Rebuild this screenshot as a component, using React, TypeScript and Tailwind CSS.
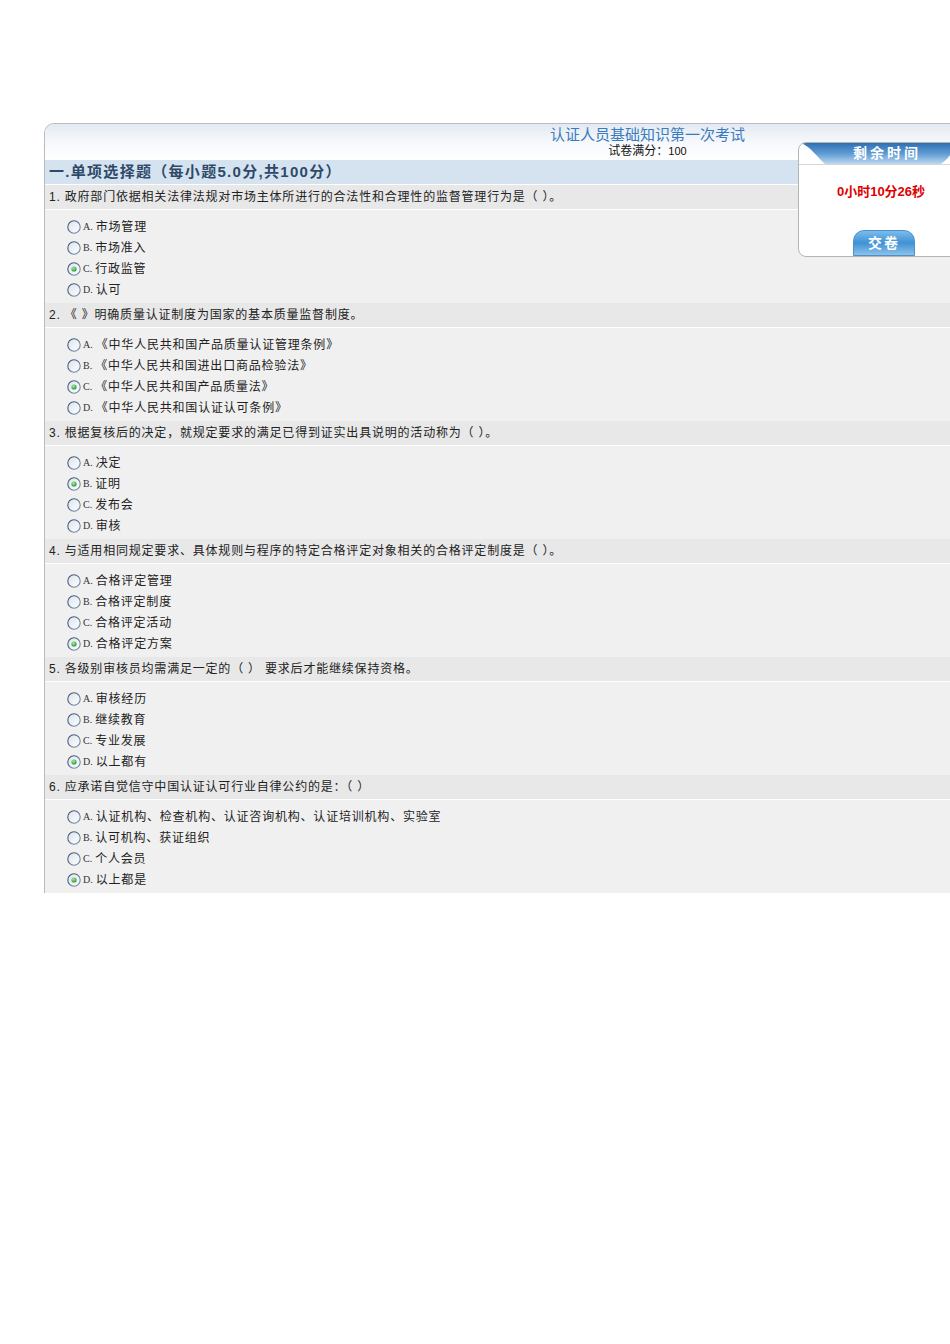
import React from "react";

type Q = { q: string; opts: string[]; ans: number; sep?: string };

const questions: Q[] = [
  {
    q: "1. 政府部门依据相关法律法规对市场主体所进行的合法性和合理性的监督管理行为是（ ）。",
    opts: ["市场管理", "市场准入", "行政监管", "认可"],
    ans: 2,
  },
  {
    q: "2. 《 》明确质量认证制度为国家的基本质量监督制度。",
    opts: [
      "《中华人民共和国产品质量认证管理条例》",
      "《中华人民共和国进出口商品检验法》",
      "《中华人民共和国产品质量法》",
      "《中华人民共和国认证认可条例》",
    ],
    ans: 2,
    sep: " ",
  },
  {
    q: "3. 根据复核后的决定，就规定要求的满足已得到证实出具说明的活动称为（  ）。",
    opts: ["决定", "证明", "发布会", "审核"],
    ans: 1,
  },
  {
    q: "4. 与适用相同规定要求、具体规则与程序的特定合格评定对象相关的合格评定制度是（ ）。",
    opts: ["合格评定管理", "合格评定制度", "合格评定活动", "合格评定方案"],
    ans: 3,
  },
  {
    q: "5. 各级别审核员均需满足一定的（ ） 要求后才能继续保持资格。",
    opts: ["审核经历", "继续教育", "专业发展", "以上都有"],
    ans: 3,
  },
  {
    q: "6. 应承诺自觉信守中国认证认可行业自律公约的是：（ ）",
    opts: [
      "认证机构、检查机构、认证咨询机构、认证培训机构、实验室",
      "认可机构、获证组织",
      "个人会员",
      "以上都是",
    ],
    ans: 3,
  },
];

function Radio({ checked }: { checked: boolean }) {
  return (
    <svg width="14" height="14" viewBox="0 0 14 14" className="shrink-0">
      <defs>
        <linearGradient id="rg" x1="0" y1="0" x2="1" y2="1">
          <stop offset="0" stopColor="#dbe3ec" />
          <stop offset="1" stopColor="#ffffff" />
        </linearGradient>
        <linearGradient id="rs" x1="0" y1="0" x2="1" y2="1">
          <stop offset="0" stopColor="#34496a" />
          <stop offset="1" stopColor="#8399b6" />
        </linearGradient>
        <radialGradient id="gd" cx="0.4" cy="0.35" r="0.7">
          <stop offset="0" stopColor="#a6eaa0" />
          <stop offset="1" stopColor="#1c9628" />
        </radialGradient>
      </defs>
      <circle cx="7" cy="7" r="6.2" fill="url(#rg)" stroke="url(#rs)" strokeWidth="1.1" />
      {checked && <circle cx="7" cy="7" r="2.6" fill="url(#gd)" />}
    </svg>
  );
}

export default function App() {
  const letters = ["A", "B", "C", "D"];
  return (
    <div
      className="relative w-[950px] h-[1344px] overflow-hidden bg-white text-[12px] text-[#222]"
      style={{ fontFamily: '"Liberation Sans", "Noto Sans CJK SC", sans-serif' }}
    >
      <div className="pt-[123px] pl-[44px]">
        <div className="w-[1206px] border-l border-t border-[#b8bcc2] rounded-tl-[10px] overflow-hidden">
          {/* header */}
          <div className="h-[36px] bg-gradient-to-b from-[#e4eaf1] via-[#f6f8fb] to-white flex flex-col items-center pt-[1px]">
            <div className="text-[15px] leading-[19px] text-[#3a7bc0]">认证人员基础知识第一次考试</div>
            <div className="text-[12px] leading-[14px] text-[#111]">
              试卷满分：<span className="text-[11px]">100</span>
            </div>
          </div>
          {/* section */}
          <div className="h-[25px] bg-[#d5e3f0] border-b border-white flex items-center pl-[4px]">
            <span className="text-[15px] font-bold text-[#2e4a68] tracking-[1.3px]">
              一.单项选择题（每小题5.0分,共100分）
            </span>
          </div>
          {questions.map((item, qi) => (
            <div key={qi}>
              <div className="h-[25px] bg-[#e8e8e8] border-b border-white flex items-center pl-[4px] text-[12px] tracking-[0.8px] text-[#222]">
                {item.q}
              </div>
              <div className="h-[93px] bg-[#f0f0f0] pt-[6px] pl-[22px]">
                {item.opts.map((o, oi) => (
                  <div key={oi} className="h-[21px] flex items-center">
                    <Radio checked={oi === item.ans} />
                    <span
                      className="ml-[2px] text-[10px] text-[#333]"
                      style={{ fontFamily: '"Liberation Serif", serif' }}
                    >
                      {letters[oi]}.
                    </span>
                    <span className="ml-[3px] text-[12px] tracking-[0.8px] text-[#222]">
                      {item.sep ? " " : ""}
                      {o}
                    </span>
                  </div>
                ))}
              </div>
            </div>
          ))}
        </div>
      </div>

      {/* timer box */}
      <div className="absolute left-[798px] top-[142px] w-[170px] h-[115px] bg-white border border-[#b5b5b5] rounded-[8px] overflow-hidden">
        <div className="relative h-[22px] border-b border-[#d8d8d8]">
          <svg width="170" height="22" viewBox="0 0 170 22" className="absolute left-0 top-0">
            <defs>
              <linearGradient id="tab" x1="0" y1="0" x2="0" y2="1">
                <stop offset="0" stopColor="#2f6fb4" />
                <stop offset="0.5" stopColor="#5f9bd3" />
                <stop offset="1" stopColor="#bcd8ef" />
              </linearGradient>
            </defs>
            <path
              d="M2 0 L160 0 C155 6 150 16 142 21 L26 21 C18 14 12 4 2 0 Z"
              fill="url(#tab)"
            />
          </svg>
          <div className="absolute left-[30px] w-[116px] top-0 h-[21px] flex items-center justify-center text-white text-[14px] font-bold tracking-[3px]">
            剩余时间
          </div>
        </div>
        <div className="h-[18px]" />
        <div className="text-center w-[166px] text-[13px] leading-[18px] font-bold text-[#e00000] pr-[2px]">
          0小时10分26秒
        </div>
        <div className="flex justify-start pl-[54px] mt-[29px]">
          <div className="w-[62px] h-[26px] rounded-t-[11px] bg-gradient-to-b from-[#79bdec] via-[#3f92d3] to-[#8cc2ea] border border-[#4d8fc8] flex items-center justify-center text-white text-[14px] font-bold tracking-[2px]">
            交卷
          </div>
        </div>
      </div>
    </div>
  );
}
